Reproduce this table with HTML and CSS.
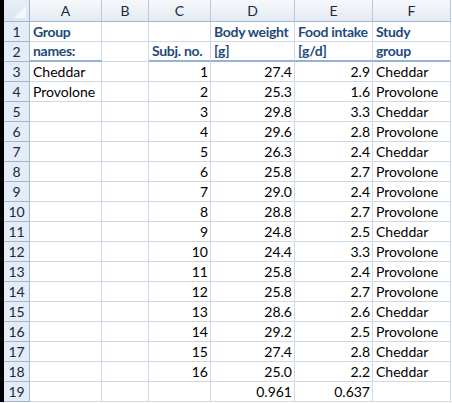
FILE: index.html
```html
<!DOCTYPE html>
<html>
<head>
<meta charset="utf-8">
<link rel="stylesheet" href="styles.css">
</head>
<body>
<div class="sheet">
  <div class="corner"><span class="tri"></span></div>
  <div class="ch">A</div><div class="ch">B</div><div class="ch">C</div><div class="ch">D</div><div class="ch">E</div><div class="ch">F</div>

  <div class="rh">1</div><div class="c hd">Group</div><div class="c"></div><div class="c hd"></div><div class="c hd">Body weight</div><div class="c hd">Food intake</div><div class="c hd">Study</div>
  <div class="rh">2</div><div class="c hd ul">names:</div><div class="c"></div><div class="c hd ul">Subj. no.</div><div class="c hd ul">[g]</div><div class="c hd ul">[g/d]</div><div class="c hd ul">group</div>
  <div class="rh">3</div><div class="c">Cheddar</div><div class="c"></div><div class="c n">1</div><div class="c n">27.4</div><div class="c n">2.9</div><div class="c">Cheddar</div>
  <div class="rh">4</div><div class="c">Provolone</div><div class="c"></div><div class="c n">2</div><div class="c n">25.3</div><div class="c n">1.6</div><div class="c">Provolone</div>
  <div class="rh">5</div><div class="c"></div><div class="c"></div><div class="c n">3</div><div class="c n">29.8</div><div class="c n">3.3</div><div class="c">Cheddar</div>
  <div class="rh">6</div><div class="c"></div><div class="c"></div><div class="c n">4</div><div class="c n">29.6</div><div class="c n">2.8</div><div class="c">Provolone</div>
  <div class="rh">7</div><div class="c"></div><div class="c"></div><div class="c n">5</div><div class="c n">26.3</div><div class="c n">2.4</div><div class="c">Cheddar</div>
  <div class="rh">8</div><div class="c"></div><div class="c"></div><div class="c n">6</div><div class="c n">25.8</div><div class="c n">2.7</div><div class="c">Provolone</div>
  <div class="rh">9</div><div class="c"></div><div class="c"></div><div class="c n">7</div><div class="c n">29.0</div><div class="c n">2.4</div><div class="c">Provolone</div>
  <div class="rh">10</div><div class="c"></div><div class="c"></div><div class="c n">8</div><div class="c n">28.8</div><div class="c n">2.7</div><div class="c">Provolone</div>
  <div class="rh">11</div><div class="c"></div><div class="c"></div><div class="c n">9</div><div class="c n">24.8</div><div class="c n">2.5</div><div class="c">Cheddar</div>
  <div class="rh">12</div><div class="c"></div><div class="c"></div><div class="c n">10</div><div class="c n">24.4</div><div class="c n">3.3</div><div class="c">Provolone</div>
  <div class="rh">13</div><div class="c"></div><div class="c"></div><div class="c n">11</div><div class="c n">25.8</div><div class="c n">2.4</div><div class="c">Provolone</div>
  <div class="rh">14</div><div class="c"></div><div class="c"></div><div class="c n">12</div><div class="c n">25.8</div><div class="c n">2.7</div><div class="c">Provolone</div>
  <div class="rh">15</div><div class="c"></div><div class="c"></div><div class="c n">13</div><div class="c n">28.6</div><div class="c n">2.6</div><div class="c">Cheddar</div>
  <div class="rh">16</div><div class="c"></div><div class="c"></div><div class="c n">14</div><div class="c n">29.2</div><div class="c n">2.5</div><div class="c">Provolone</div>
  <div class="rh">17</div><div class="c"></div><div class="c"></div><div class="c n">15</div><div class="c n">27.4</div><div class="c n">2.8</div><div class="c">Cheddar</div>
  <div class="rh">18</div><div class="c"></div><div class="c"></div><div class="c n">16</div><div class="c n">25.0</div><div class="c n">2.2</div><div class="c">Cheddar</div>
  <div class="rh">19</div><div class="c"></div><div class="c"></div><div class="c"></div><div class="c n">0.961</div><div class="c n">0.637</div><div class="c"></div>
</div>
</body>
</html>
```

FILE: styles.css
```css
html, body {
  margin: 0;
  padding: 0;
  background: #ffffff;
}
body {
  font-family: Lato, "Open Sans", sans-serif;
  font-size: 14px;
  color: #000;
}
.sheet {
  display: grid;
  grid-template-columns: 26px 72px 47px 62px 84px 78px 78px;
  grid-template-rows: 22px repeat(19, 20px);
  border-left: 4px solid #000;
  width: 447px;
}
.sheet > div {
  box-sizing: border-box;
  overflow: hidden;
  white-space: nowrap;
}
.corner {
  position: relative;
  background: linear-gradient(#e9eef6, #dce5f1);
  border-right: 1px solid #9eb6ce;
  border-bottom: 1px solid #9eb6ce;
}
.tri {
  position: absolute;
  right: 3px;
  bottom: 3px;
  width: 0;
  height: 0;
  border-left: 12px solid transparent;
  border-bottom: 12px solid #f4f7fb;
}
.ch {
  background: linear-gradient(#f6f8fb, #e4eaf3);
  border-right: 1px solid #b8c9dd;
  border-bottom: 1px solid #9eb6ce;
  text-align: center;
  line-height: 21px;
  color: #1c2a3c;
}
.rh {
  background: #e4ecf7;
  border-right: 1px solid #9eb6ce;
  border-bottom: 1px solid #9eb6ce;
  text-align: center;
  line-height: 19px;
  color: #1c2a3c;
}
.c {
  border-right: 1px solid #d0d7e5;
  border-bottom: 1px solid #d0d7e5;
  line-height: 19px;
  padding: 0 2px 0 3px;
}
.n {
  text-align: right;
}
.hd {
  font-weight: bold;
  color: #1f497d;
  letter-spacing: -0.3px;
}
.ul {
  border-bottom: 2px solid #95b3d7;
  line-height: 18px;
}
```
